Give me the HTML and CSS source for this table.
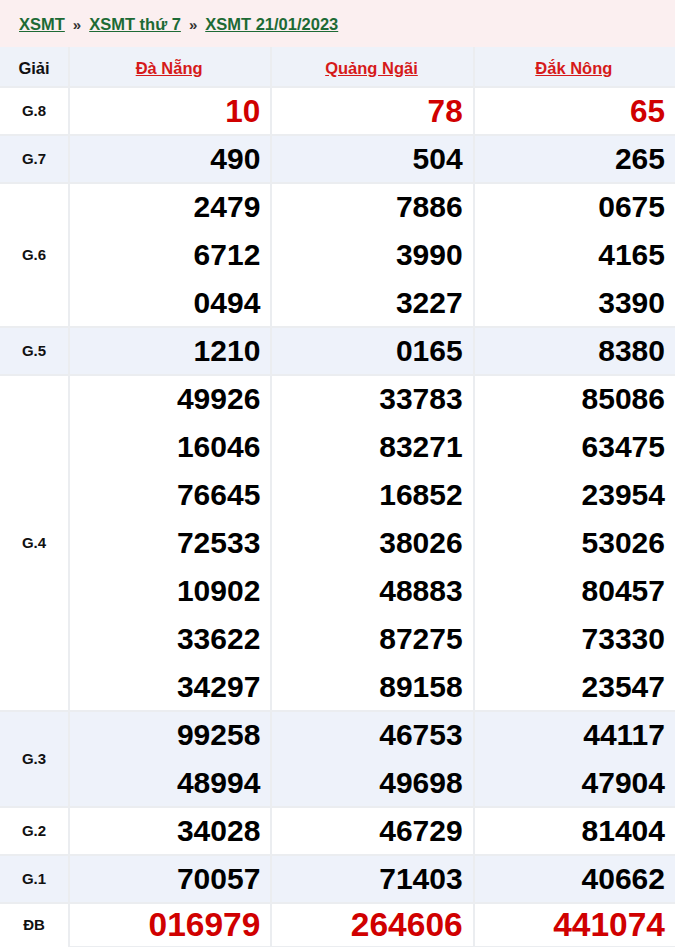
FILE: index.html
```html
<!DOCTYPE html>
<html lang="vi">
<head>
<meta charset="utf-8">
<link rel="stylesheet" href="styles.css">
</head>
<body>
<div class="crumbs">
  <a href="#">XSMT</a><span class="sep">»</span><a href="#">XSMT thứ 7</a><span class="sep">»</span><a href="#">XSMT 21/01/2023</a>
</div>
<table class="kq">
  <colgroup><col class="c0"><col class="c1"><col class="c1"><col class="c1"></colgroup>
  <thead>
    <tr><th class="lbl">Giải</th><th><a href="#">Đà Nẵng</a></th><th><a href="#">Quảng Ngãi</a></th><th><a href="#">Đắk Nông</a></th></tr>
  </thead>
  <tbody>
    <tr class="g8"><td class="lbl">G.8</td><td class="red"><div>10</div></td><td class="red"><div>78</div></td><td class="red"><div>65</div></td></tr>
    <tr class="alt"><td class="lbl">G.7</td><td><div>490</div></td><td><div>504</div></td><td><div>265</div></td></tr>
    <tr><td class="lbl">G.6</td><td><div>2479</div><div>6712</div><div>0494</div></td><td><div>7886</div><div>3990</div><div>3227</div></td><td><div>0675</div><div>4165</div><div>3390</div></td></tr>
    <tr class="alt"><td class="lbl">G.5</td><td><div>1210</div></td><td><div>0165</div></td><td><div>8380</div></td></tr>
    <tr><td class="lbl">G.4</td>
      <td><div>49926</div><div>16046</div><div>76645</div><div>72533</div><div>10902</div><div>33622</div><div>34297</div></td>
      <td><div>33783</div><div>83271</div><div>16852</div><div>38026</div><div>48883</div><div>87275</div><div>89158</div></td>
      <td><div>85086</div><div>63475</div><div>23954</div><div>53026</div><div>80457</div><div>73330</div><div>23547</div></td></tr>
    <tr class="alt"><td class="lbl">G.3</td><td><div>99258</div><div>48994</div></td><td><div>46753</div><div>49698</div></td><td><div>44117</div><div>47904</div></td></tr>
    <tr><td class="lbl">G.2</td><td><div>34028</div></td><td><div>46729</div></td><td><div>81404</div></td></tr>
    <tr class="alt"><td class="lbl">G.1</td><td><div>70057</div></td><td><div>71403</div></td><td><div>40662</div></td></tr>
    <tr class="db"><td class="lbl">ĐB</td><td class="red"><div>016979</div></td><td class="red"><div>264606</div></td><td class="red"><div>441074</div></td></tr>
  </tbody>
</table>
</body>
</html>
```
FILE: styles.css
```css
html, body {
  margin: 0;
  padding: 0;
  background: #ffffff;
  font-family: "Liberation Sans", Arial, sans-serif;
}
.crumbs {
  height: 47px;
  background: #fbeff0;
  display: flex;
  align-items: center;
  padding-left: 19px;
  padding-top: 1px;
  font-size: 16.5px;
  font-weight: bold;
  box-sizing: border-box;
}
.crumbs a {
  color: #1d6a35;
  text-decoration: underline;
}
.crumbs .sep {
  color: #333;
  margin: 0 8px;
  font-weight: bold;
  font-size: 15px;
}
.kq {
  width: 675px;
  border-collapse: collapse;
  border-spacing: 0;
  table-layout: fixed;
}
.kq col.c0 { width: 68px; }
.kq th, .kq td {
  border: none;
  padding: 0;
  box-shadow: inset 2px 2px 0 #ebedf0;
}
.kq tr > :first-child { box-shadow: inset 0 2px 0 #ebedf0; }
.kq thead th { box-shadow: inset 2px 0 0 #ebedf0; }
.kq thead th:first-child { box-shadow: none; }
.kq thead tr { background: #eef2f9; }
.kq th {
  height: 39px;
  padding-top: 3px;
  box-sizing: border-box;
  font-size: 16.5px;
  font-weight: bold;
  text-align: center;
  vertical-align: middle;
}
.kq th a {
  color: #d61a1a;
  text-decoration: underline;
}
.kq th.lbl { color: #111; }
.kq td.lbl {
  text-align: center;
  font-size: 15px;
  font-weight: bold;
  color: #111;
}
.kq td div {
  height: 48px;
  line-height: 50px;
  text-align: right;
  padding-right: 10px;
  font-size: 30px;
  font-weight: bold;
  color: #000;
}
.kq td.red div { color: #d00000; }
.kq tr.g8 td div { font-size: 31.5px; }
.kq tr.alt { background: #eef2fa; }
.kq tr.db td div {
  height: 44px;
  line-height: 46px;
  font-size: 33.5px;
  border-bottom: 2px solid #ebedf0;
}
.kq tr.db td.lbl { border-bottom: 2px solid #ebedf0; }
```
